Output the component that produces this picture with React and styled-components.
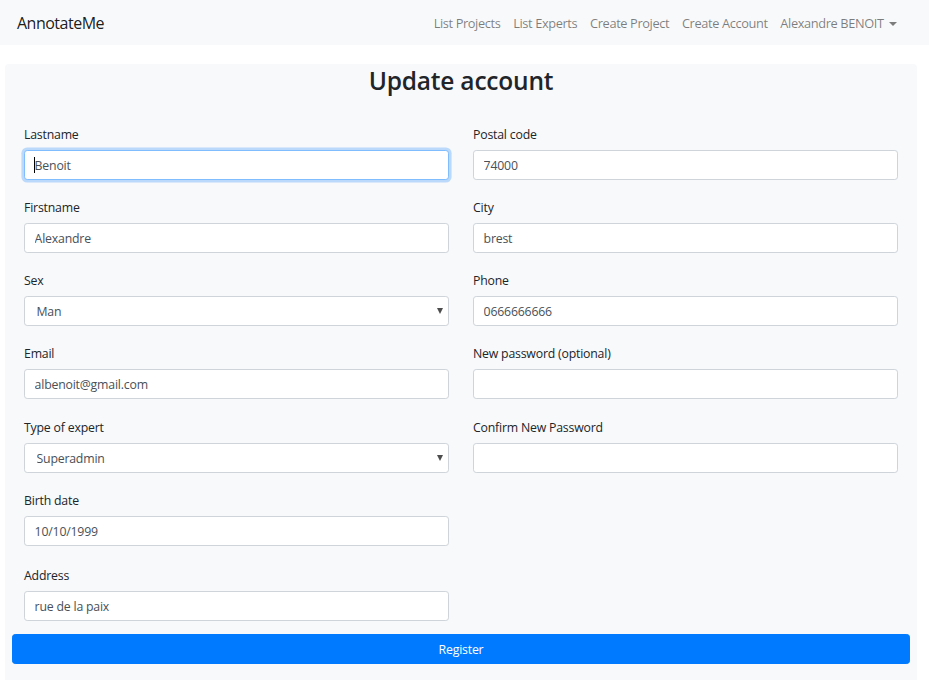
import React from 'react';
import styled, { createGlobalStyle } from 'styled-components';

const GlobalStyle = createGlobalStyle`
    html, body {
        margin: 0;
        padding: 0;
        background: #fff;
    }
    body {
        font-family: "Open Sans", "Noto Sans", Arial, sans-serif;
        color: #212529;
    }
    * {
        box-sizing: border-box;
    }
`;

const Navbar = styled.nav`
    display: flex;
    align-items: center;
    justify-content: space-between;
    height: 45px;
    padding: 0 26px 0 17px;
    background: #f8f9fa;
`;

const Brand = styled.a`
    font-size: 16px;
    color: rgba(0, 0, 0, 0.9);
    text-decoration: none;
    letter-spacing: -0.5px;
`;

const NavLinks = styled.ul`
    display: flex;
    align-items: center;
    list-style: none;
    margin: 0;
    padding: 0;
`;

const NavLink = styled.li`
    font-size: 12.8px;
    color: rgba(0, 0, 0, 0.5);
    padding: 0 6.4px;
    letter-spacing: -0.38px;
    white-space: nowrap;
`;

const Caret = styled.span`
    display: inline-block;
    margin-left: 5px;
    vertical-align: 2px;
    border-top: 4px solid rgba(0, 0, 0, 0.5);
    border-left: 4px solid transparent;
    border-right: 4px solid transparent;
`;

const Card = styled.main`
    margin: 19px 12px 0 5px;
    padding: 1px 7px 20px;
    background: #f8f9fa;
    border-radius: 4px;
`;

const Title = styled.h2`
    margin: 0;
    height: 60px;
    line-height: 32px;
    text-align: center;
    font-size: 24.5px;
    font-weight: 600;
    color: #212529;
    letter-spacing: -0.2px;
`;

const Columns = styled.div`
    display: grid;
    grid-template-columns: 1fr 1fr;
`;

const Column = styled.div`
    display: flex;
    flex-direction: column;
    padding: 0 12px;
`;

const Group = styled.div`
    display: flex;
    flex-direction: column;
    margin-bottom: ${p => p.$gap || 17.6}px;
`;

const Label = styled.label`
    font-size: 12.3px;
    line-height: 20px;
    margin-bottom: 5px;
    color: #212529;
    letter-spacing: -0.2px;
`;

const Field = styled.div`
    position: relative;
`;

const Input = styled.input`
    display: block;
    width: 100%;
    height: 30.4px;
    padding: 4.8px 9.6px;
    font-family: inherit;
    font-size: 12.3px;
    letter-spacing: -0.2px;
    color: #495057;
    background: #fff;
    border: 1px solid ${p => (p.$focused ? '#80bdff' : '#ced4da')};
    border-radius: 3.2px;
    box-shadow: ${p => (p.$focused ? '0 0 0 2.6px rgba(0, 123, 255, 0.25)' : 'none')};
    outline: none;
`;

const Select = styled.select`
    display: block;
    width: 100%;
    height: 30.4px;
    padding: 4.8px 8px 4.8px 11.5px;
    font-family: inherit;
    font-size: 12.3px;
    letter-spacing: -0.2px;
    color: #495057;
    background: #fff;
    border: 1px solid #ced4da;
    border-radius: 3.2px;
    appearance: none;
    -webkit-appearance: none;
    outline: none;
`;

const SelectArrow = styled.span`
    position: absolute;
    right: 6px;
    top: 12px;
    pointer-events: none;
    border-top: 6px solid #4d4d4d;
    border-left: 3.5px solid transparent;
    border-right: 3.5px solid transparent;
`;

const TextCaret = styled.span`
    position: absolute;
    left: 10px;
    top: 7px;
    width: 1px;
    height: 16px;
    background: #000;
`;

const Button = styled.button`
    display: block;
    width: 100%;
    height: 30.4px;
    margin-top: -5px;
    font-family: inherit;
    font-size: 12.3px;
    letter-spacing: -0.2px;
    color: #fff;
    background: #007bff;
    border: 1px solid #007bff;
    border-radius: 3.2px;
`;

const leftFields = [
    { label: 'Lastname', value: 'Benoit', focused: true },
    { label: 'Firstname', value: 'Alexandre' },
    { label: 'Sex', select: ['Man', 'Woman'] },
    { label: 'Email', value: 'albenoit@gmail.com', gap: 18.6 },
    { label: 'Type of expert', select: ['Superadmin', 'Admin', 'Expert'] },
    { label: 'Birth date', value: '10/10/1999', gap: 19.6 },
    { label: 'Address', value: 'rue de la paix' },
];

const rightFields = [
    { label: 'Postal code', value: '74000' },
    { label: 'City', value: 'brest' },
    { label: 'Phone', value: '0666666666' },
    { label: 'New password (optional)', value: '', gap: 18.6 },
    { label: 'Confirm New Password', value: '' },
];

const FormField = ({ field }) => (
    <Group $gap={field.gap}>
        <Label>{field.label}</Label>
        <Field>
            {field.select ? (
                <>
                    <Select defaultValue={field.select[0]}>
                        {field.select.map(opt => <option key={opt}>{opt}</option>)}
                    </Select>
                    <SelectArrow />
                </>
            ) : (
                <>
                    <Input readOnly $focused={field.focused} value={field.value} />
                    {field.focused && <TextCaret />}
                </>
            )}
        </Field>
    </Group>
);

export default function App() {
    return (
        <>
            <GlobalStyle />
            <Navbar>
                <Brand>AnnotateMe</Brand>
                <NavLinks>
                    <NavLink>List Projects</NavLink>
                    <NavLink>List Experts</NavLink>
                    <NavLink>Create Project</NavLink>
                    <NavLink>Create Account</NavLink>
                    <NavLink>Alexandre BENOIT<Caret /></NavLink>
                </NavLinks>
            </Navbar>
            <Card>
                <Title>Update account</Title>
                <Columns>
                    <Column>
                        {leftFields.map(f => <FormField key={f.label} field={f} />)}
                    </Column>
                    <Column>
                        {rightFields.map(f => <FormField key={f.label} field={f} />)}
                    </Column>
                </Columns>
                <Button>Register</Button>
            </Card>
        </>
    );
}
